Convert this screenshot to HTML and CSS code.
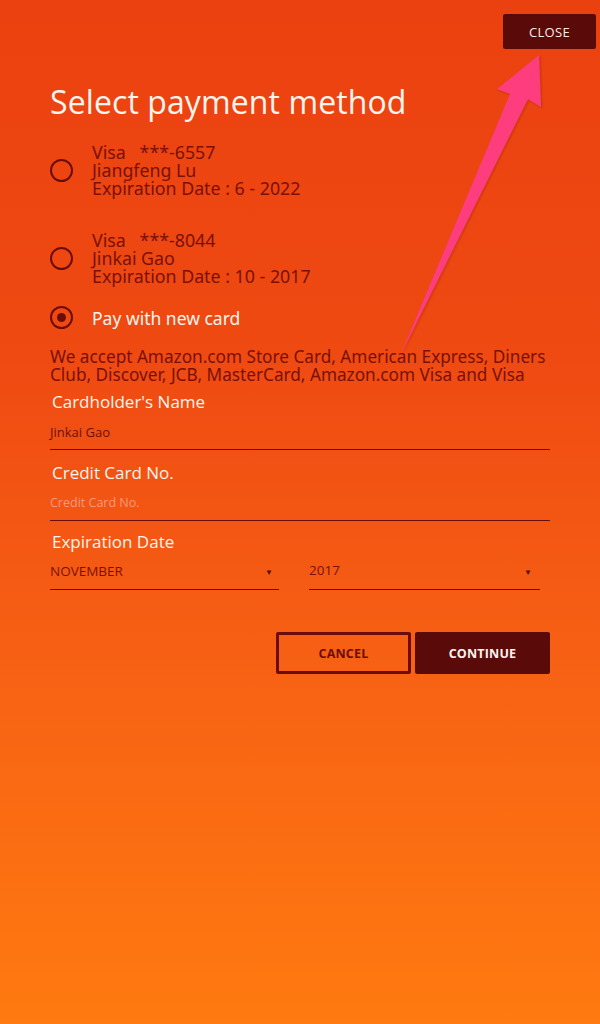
FILE: index.html
```html
<!DOCTYPE html>
<html>
<head>
<meta charset="utf-8">
<link rel="stylesheet" href="styles.css">
</head>
<body>
<div class="screen">
  <div class="topbar"><button class="close">CLOSE</button></div>
  <div class="content">
    <h1 class="title">Select payment method</h1>
    <div class="option first">
      <span class="radio"></span>
      <div class="card-info">
        <div>Visa&nbsp;&nbsp;&nbsp;***-6557</div>
        <div>Jiangfeng Lu</div>
        <div>Expiration Date : 6 - 2022</div>
      </div>
    </div>
    <div class="option second">
      <span class="radio"></span>
      <div class="card-info">
        <div>Visa&nbsp;&nbsp;&nbsp;***-8044</div>
        <div>Jinkai Gao</div>
        <div>Expiration Date : 10 - 2017</div>
      </div>
    </div>
    <div class="option option-new">
      <span class="radio checked"></span>
      <div class="new-label">Pay with new card</div>
    </div>
    <p class="accept">We accept Amazon.com Store Card, American Express, Diners Club, Discover, JCB, MasterCard, Amazon.com Visa and Visa</p>
    <div class="field">
      <div class="label">Cardholder's Name</div>
      <div class="input value">Jinkai Gao</div>
    </div>
    <div class="field">
      <div class="label">Credit Card No.</div>
      <div class="input placeholder">Credit Card No.</div>
    </div>
    <div class="field date">
      <div class="label">Expiration Date</div>
      <div class="selects">
        <div class="select month"><span>NOVEMBER</span><span class="caret">&#9660;</span></div>
        <div class="select year"><span>2017</span><span class="caret">&#9660;</span></div>
      </div>
    </div>
    <div class="actions">
      <button class="btn cancel">CANCEL</button>
      <button class="btn continue">CONTINUE</button>
    </div>
  </div>
  <svg class="pointer" width="600" height="400" viewBox="0 0 600 400">
    <defs>
      <filter id="sh" x="-20%" y="-20%" width="140%" height="140%">
        <feDropShadow dx="1" dy="1" stdDeviation="1.2" flood-color="#7a1a00" flood-opacity="0.35"/>
      </filter>
    </defs>
    <polygon filter="url(#sh)" fill="#fd3c7e" points="400,356 510,94 497,89 539,55 541,107 528,99"/>
  </svg>
</div>
</body>
</html>
```

FILE: styles.css
```css
* { box-sizing: border-box; }
html, body { margin: 0; padding: 0; }
body {
  width: 600px;
  height: 1024px;
  background: linear-gradient(180deg, #eb4110 0%, #ef4a12 35%, #f76114 65%, #ff7a10 100%);
  font-family: "Noto Sans", "Open Sans", sans-serif;
  color: #7a1006;
}
.screen { position: relative; width: 600px; height: 1024px; overflow: hidden; }
.topbar {
  display: flex;
  justify-content: flex-end;
  padding: 14px 4px 0 0;
}
.close {
  width: 93px;
  height: 35px;
  border: none;
  border-radius: 2px;
  background: #5a0b09;
  color: #fbe9e4;
  font-family: "Open Sans", sans-serif;
  font-size: 13px;
  letter-spacing: 0.3px;
  padding: 0;
}
.content { padding: 0 50px; }
.title {
  margin: 33px 0 0;
  font-family: "Open Sans", "Noto Sans", sans-serif;
  font-weight: 400;
  font-size: 32px;
  line-height: 40px;
  color: #fff4ee;
  letter-spacing: 0.1px;
}
.option {
  display: flex;
  align-items: center;
  gap: 19px;
}
.option.first { margin-top: 21px; }
.option.second { margin-top: 34px; }
.option.option-new { margin-top: 21px; }
.radio {
  width: 23px;
  height: 23px;
  border: 2px solid #6c0c08;
  border-radius: 50%;
  flex: none;
  display: flex;
  align-items: center;
  justify-content: center;
}
.radio.checked::after {
  content: "";
  width: 9px;
  height: 9px;
  border-radius: 50%;
  background: #6c0c08;
}
.card-info {
  font-size: 17.8px;
  line-height: 18px;
  color: #7a1006;
}
.new-label {
  font-size: 17.5px;
  line-height: 20px;
  color: #fff4ee;
  padding-top: 1px;
}
.accept {
  margin: 19px 0 0;
  font-size: 17.2px;
  line-height: 18px;
  color: #7a1006;
}
.field { margin-top: 7px; }
.label {
  font-family: "Open Sans", "Noto Sans", sans-serif;
  font-size: 17px;
  line-height: 22px;
  color: #fff4ee;
  padding-left: 2px;
}
.field + .field { margin-top: 12px; }
.field.date { margin-top: 10px; }
.input {
  height: 37px;
  border-bottom: 1px solid #6c0c08;
  font-family: "Open Sans", sans-serif;
  font-size: 12.5px;
  padding-top: 10px;
}
.input.value { color: #6e0e08; font-size: 13px; }
.input.placeholder { color: #f89a7a; }
.selects {
  display: flex;
  gap: 30px;
  padding-right: 10px;
}
.select {
  flex: 1;
  display: flex;
  justify-content: space-between;
  align-items: center;
  height: 37px;
  border-bottom: 1px solid #6c0c08;
  font-family: "Open Sans", sans-serif;
  font-size: 13.5px;
  color: #7a1006;
  padding: 0 6px 0 0;
}
.select.year { padding-right: 8px; }
.select.year span:first-child { margin-top: -2px; }
.caret { font-size: 8px; color: #5a0b09; }
.actions {
  display: flex;
  justify-content: flex-end;
  gap: 4px;
  margin-top: 42px;
}
.btn {
  width: 135px;
  height: 42px;
  border-radius: 2px;
  font-family: "Open Sans", sans-serif;
  font-weight: 700;
  font-size: 12.5px;
  letter-spacing: 0.2px;
  padding: 0;
}
.cancel {
  background: transparent;
  border: 3px solid #6c0c08;
  color: #6c0c08;
}
.continue {
  background: #5a0b09;
  border: none;
  color: #fff4ee;
}
.pointer {
  position: absolute;
  left: 0;
  top: 0;
  pointer-events: none;
}
```
